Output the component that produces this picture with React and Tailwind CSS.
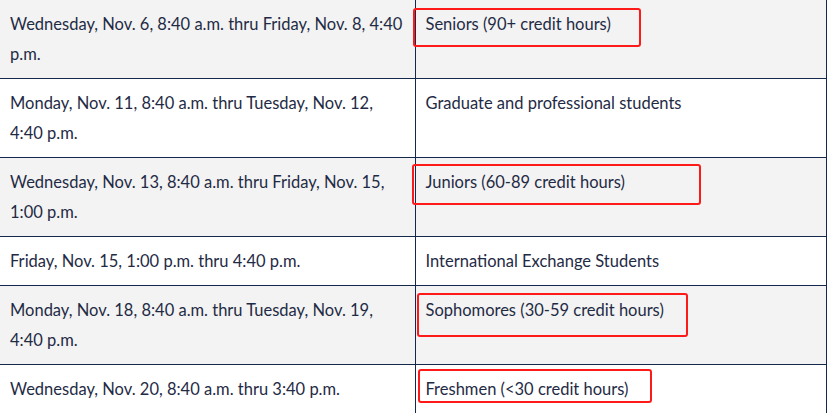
const rows = [
  {
    when: "Wednesday, Nov. 6, 8:40 a.m. thru Friday, Nov. 8, 4:40 p.m.",
    who: "Seniors (90+ credit hours)",
    shade: true,
  },
  {
    when: "Monday, Nov. 11, 8:40 a.m. thru Tuesday, Nov. 12, 4:40 p.m.",
    who: "Graduate and professional students",
  },
  {
    when: "Wednesday, Nov. 13, 8:40 a.m. thru Friday, Nov. 15, 1:00 p.m.",
    who: "Juniors (60-89 credit hours)",
    shade: true,
  },
  {
    when: "Friday, Nov. 15, 1:00 p.m. thru 4:40 p.m.",
    who: "International Exchange Students",
  },
  {
    when: "Monday, Nov. 18, 8:40 a.m. thru Tuesday, Nov. 19, 4:40 p.m.",
    who: "Sophomores (30-59 credit hours)",
    shade: true,
  },
  {
    when: "Wednesday, Nov. 20, 8:40 a.m. thru 3:40 p.m.",
    who: "Freshmen (<30 credit hours)",
  },
];

// highlight boxes drawn over the table
const marks = [
  "left-[413px] top-[8px] w-[228px] h-[39px]",
  "left-[412px] top-[164px] w-[289px] h-[41px]",
  "left-[417px] top-[293px] w-[271px] h-[44px]",
  "left-[418px] top-[369px] w-[234px] h-[34px]",
];

export default function App() {
  return (
    <div className="relative h-[413px] w-[828px] overflow-hidden bg-white font-['Lato',sans-serif] text-[16.5px] leading-[30px] text-[#1f2b45]">
      <table className="w-[827px] table-fixed border-collapse">
        <colgroup>
          <col className="w-[415px]" />
          <col />
        </colgroup>
        <tbody>
          {rows.map((r, i) => (
            <tr key={i} className={r.shade ? "bg-[#f3f3f3]" : "bg-white"}>
              <td className="border-b border-r border-[#13284a] py-[9px] pl-[10px] pr-[9px] align-top">
                {r.when}
              </td>
              <td className="border-b border-r border-[#13284a] py-[9px] pl-[10px] pr-[10px] align-top">
                {r.who}
              </td>
            </tr>
          ))}
        </tbody>
      </table>
      {marks.map((m) => (
        <div
          key={m}
          className={`pointer-events-none absolute rounded-[3px] border-2 border-[#ff1a1a] ${m}`}
        />
      ))}
    </div>
  );
}
